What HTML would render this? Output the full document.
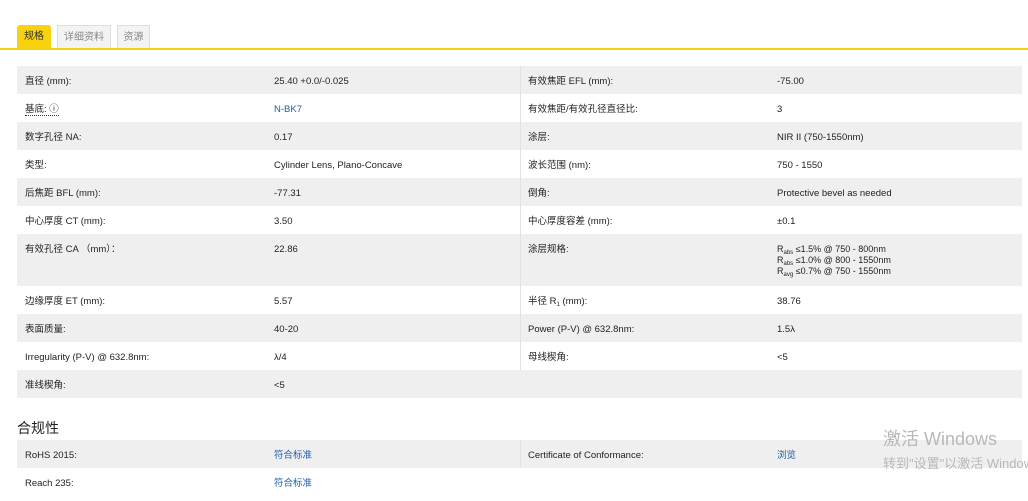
<!DOCTYPE html>
<html><head><meta charset="utf-8"><style>
body{margin:0;background:#fff;font-family:"Liberation Sans","Noto Sans CJK SC",sans-serif;font-size:9.5px;color:#222;width:1028px;height:501px;overflow:hidden;position:relative}
.tab{position:absolute;top:25px;height:24px;line-height:24px;font-size:10px;text-align:center;box-sizing:border-box}
.t1{left:17px;width:34px;background:#f8d20f;border-radius:3px 3px 0 0;color:#333}
.t2{left:57px;width:54px;background:#f3f3f3;border:1px solid #ddd;border-bottom:none;color:#888}
.t3{left:117px;width:33px;background:#f3f3f3;border:1px solid #ddd;border-bottom:none;color:#888}
.line{position:absolute;left:0;right:0;top:48px;height:2px;background:#f8d20f}
.row{position:absolute;left:17px;width:1005px;height:28px}
.g{background:#efefef}
.c{position:absolute;top:10px;line-height:11px}
.a{left:8px}.b{left:257px}.d{left:511px}.e{left:760px}
.div{position:absolute;left:520px;width:1px;background:#e2e2e2}
a{color:#1f5ea8;text-decoration:none}
sub{font-size:6px;vertical-align:-2px;line-height:0}
.h{position:absolute;left:17px;top:418px;font-size:14px;color:#222}
.wm{position:absolute;left:883px;color:#b8b8b8}
</style></head><body>
<div class="tab t1">规格</div><div class="tab t2">详细资料</div><div class="tab t3">资源</div>
<div class="line"></div>
<div class="row g" style="top:66px"><span class="c a">直径 (mm):</span><span class="c b">25.40 +0.0/-0.025</span><span class="c d">有效焦距 EFL (mm):</span><span class="c e">-75.00</span></div>
<div class="row" style="top:94px"><span class="c a" style="border-bottom:1px dotted #333">基底: ⓘ</span><span class="c b"><a>N-BK7</a></span><span class="c d">有效焦距/有效孔径直径比:</span><span class="c e">3</span></div>
<div class="row g" style="top:122px"><span class="c a">数字孔径 NA:</span><span class="c b">0.17</span><span class="c d">涂层:</span><span class="c e">NIR II (750-1550nm)</span></div>
<div class="row" style="top:150px"><span class="c a">类型:</span><span class="c b">Cylinder Lens, Plano-Concave</span><span class="c d">波长范围 (nm):</span><span class="c e">750 - 1550</span></div>
<div class="row g" style="top:178px"><span class="c a">后焦距 BFL (mm):</span><span class="c b">-77.31</span><span class="c d">倒角:</span><span class="c e">Protective bevel as needed</span></div>
<div class="row" style="top:206px"><span class="c a">中心厚度 CT (mm):</span><span class="c b">3.50</span><span class="c d">中心厚度容差 (mm):</span><span class="c e">±0.1</span></div>
<div class="row g" style="top:234px;height:52px"><span class="c a">有效孔径 CA （mm）：</span><span class="c b">22.86</span><span class="c d">涂层规格:</span><span class="c e" style="font-size:9px;line-height:11px">R<sub>abs</sub> ≤1.5% @ 750 - 800nm<br>R<sub>abs</sub> ≤1.0% @ 800 - 1550nm<br>R<sub>avg</sub> ≤0.7% @ 750 - 1550nm</span></div>
<div class="row" style="top:286px"><span class="c a">边缘厚度 ET (mm):</span><span class="c b">5.57</span><span class="c d">半径 R<sub>1</sub> (mm):</span><span class="c e">38.76</span></div>
<div class="row g" style="top:314px"><span class="c a">表面质量:</span><span class="c b">40-20</span><span class="c d">Power (P-V) @ 632.8nm:</span><span class="c e">1.5λ</span></div>
<div class="row" style="top:342px"><span class="c a">Irregularity (P-V) @ 632.8nm:</span><span class="c b">λ/4</span><span class="c d">母线楔角:</span><span class="c e">&lt;5</span></div>
<div class="row g" style="top:370px"><span class="c a">准线楔角:</span><span class="c b">&lt;5</span></div>
<div class="div" style="top:66px;height:304px"></div>
<div class="h">合规性</div>
<div class="row g" style="top:440px"><span class="c a">RoHS 2015:</span><span class="c b"><a>符合标准</a></span><span class="c d">Certificate of Conformance:</span><span class="c e"><a>浏览</a></span></div>
<div class="row" style="top:468px"><span class="c a">Reach 235:</span><span class="c b"><a>符合标准</a></span></div>
<div class="div" style="top:440px;height:28px"></div>
<div class="wm" style="top:425px;font-size:18px">激活 Windows</div>
<div class="wm" style="top:453px;font-size:13px;white-space:nowrap">转到"设置"以激活 Windows</div>
</body></html>
